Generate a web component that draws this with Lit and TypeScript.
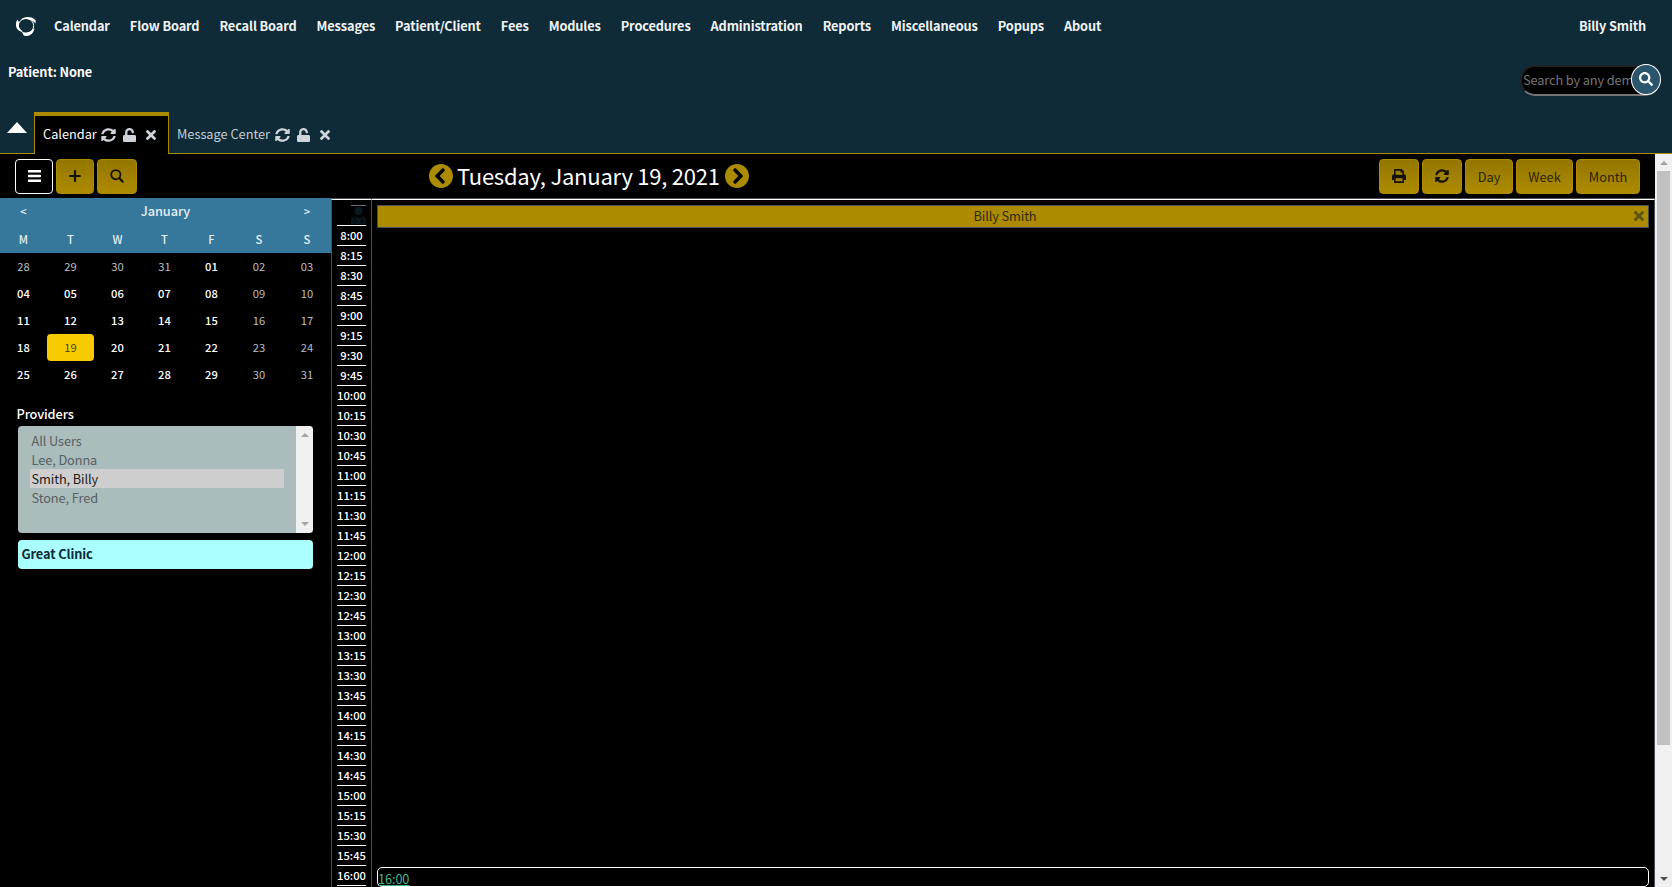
import { LitElement, html, css, svg } from "lit";
import { customElement } from "lit/decorators.js";
import { classMap } from "lit/directives/class-map.js";

const ICONS: Record<string, [string, unknown]> = {
  sync: ["0 0 512 512", svg`<path d="M370.72 133.28C339.458 104.008 298.888 87.962 255.848 88c-77.458.068-144.328 53.178-162.791 126.85-1.344 5.363-6.122 9.15-11.651 9.15H24.103c-7.498 0-13.194-6.807-11.807-14.176C33.933 94.924 134.813 8 256 8c66.448 0 126.791 26.136 171.315 68.685L463.03 40.97C478.149 25.851 504 36.559 504 57.941V192c0 13.255-10.745 24-24 24H345.941c-21.382 0-32.09-25.851-16.971-40.971l41.75-41.749zM32 296h134.059c21.382 0 32.09 25.851 16.971 40.971l-41.75 41.75c31.262 29.273 71.835 45.319 114.876 45.28 77.418-.07 144.315-53.144 162.787-126.849 1.344-5.363 6.122-9.15 11.651-9.15h57.304c7.498 0 13.194 6.807 11.807 14.176C478.067 417.076 377.187 504 256 504c-66.448 0-126.791-26.136-171.315-68.685L48.97 471.03C33.851 486.149 8 475.441 8 454.059V320c0-13.255 10.745-24 24-24z"/>`],
  unlock: ["0 0 448 512", svg`<path d="M400 256H152V152.900c0-39.600 31.700-72.500 71.300-72.900 40-.4 72.700 32.100 72.700 72v16c0 13.300 10.700 24 24 24h32c13.300 0 24-10.700 24-24v-16C376 68 307.500-.3 223.500 0 139.500.3 72 69.500 72 153.500V256H48c-26.500 0-48 21.500-48 48v160c0 26.500 21.500 48 48 48h352c26.500 0 48-21.500 48-48V304c0-26.500-21.500-48-48-48z"/>`],
  close: ["0 0 352 352", svg`<path d="M242.720 176l100.070-100.070c12.280-12.280 12.280-32.190 0-44.480l-22.240-22.240c-12.280-12.280-32.190-12.280-44.480 0L176 109.280 75.930 9.210c-12.280-12.280-32.190-12.280-44.480 0L9.210 31.450c-12.280 12.280-12.280 32.190 0 44.480L109.280 176 9.210 276.070c-12.280 12.280-12.280 32.190 0 44.480l22.240 22.240c12.280 12.280 32.200 12.280 44.480 0L176 242.720l100.070 100.070c12.280 12.280 32.200 12.280 44.480 0l22.240-22.240c12.280-12.280 12.280-32.190 0-44.480L242.720 176z"/>`],
  search: ["0 0 512 512", svg`<path d="M505 442.700L405.300 343c-4.500-4.500-10.600-7-17-7H372c27.600-35.300 44-79.700 44-128C416 93.100 322.900 0 208 0S0 93.100 0 208s93.100 208 208 208c48.300 0 92.700-16.400 128-44v16.300c0 6.400 2.500 12.500 7 17l99.700 99.700c9.400 9.400 24.600 9.400 33.900 0l28.300-28.300c9.400-9.400 9.400-24.600.1-34zM208 336c-70.700 0-128-57.200-128-128 0-70.700 57.200-128 128-128 70.700 0 128 57.200 128 128 0 70.700-57.200 128-128 128z"/>`],
  find: ["0 0 14 14", svg`<g fill="none" stroke="currentColor" stroke-linecap="round"><circle cx="5.800" cy="5.700" r="4.600" stroke-width="1.800"/><path d="M9.400 9.300l3.300 3.400" stroke-width="2.200"/></g>`],
  left: ["8 8 496 496", svg`<path d="M256 504C119 504 8 393 8 256S119 8 256 8s248 111 248 248-111 248-248 248zM142.100 273l135.500 135.500c9.400 9.400 24.600 9.400 33.900 0l17-17c9.400-9.400 9.400-24.600 0-33.900L226.900 256l101.600-101.600c9.400-9.400 9.400-24.600 0-33.900l-17-17c-9.400-9.400-24.600-9.400-33.900 0L142.100 239c-9.400 9.400-9.400 24.600 0 34z"/>`],
  right: ["8 8 496 496", svg`<path d="M256 8c137 0 248 111 248 248S393 504 256 504 8 393 8 256 119 8 256 8zm113.900 231L234.400 103.500c-9.400-9.400-24.600-9.400-33.900 0l-17 17c-9.400 9.400-9.400 24.600 0 33.900L285.100 256 183.500 357.600c-9.400 9.400-9.400 24.600 0 33.900l17 17c9.400 9.400 24.600 9.400 33.900 0L369.900 273c9.400-9.400 9.400-24.600 0-34z"/>`],
  print: ["0 0 14 14", svg`<path fill-rule="evenodd" d="M2.500 0h7.200L12 2.300V5.200a2 2 0 0 1 2 2V11h-2v3H2v-3H0V7.200a2 2 0 0 1 2-2V.5zM3.600 1.700v4h6.800V3.600H8.400V1.700zM3.600 9.300v3h6.800v-3z"/>`],
  plus: ["0 0 12 12", svg`<path d="M4.900.3h2.200v4.600h4.600v2.200H7.100v4.600H4.900V7.100H.3V4.900h4.600z"/>`],
  bars: ["0 0 13 12", svg`<path d="M0 0h13v2.500H0zM0 4.700h13v2.600H0zM0 9.500h13v2.500H0z"/>`],
  person: ["0 0 15 17", svg`<path d="M7.500 0a4 4 0 1 1 0 8 4 4 0 0 1 0-8M0 17v-3.500C0 11 1.500 9.500 4 9.500l3.500 2 3.500-2c2.500 0 4 1.500 4 4V17z"/><path d="M3.500 10v3m7.500-3v3M2.300 15.500v-1.200a1.400 1.400 0 0 1 2.800 0v1.200M9.800 14.300a1.300 1.300 0 1 0 2.600 0 1.300 1.300 0 1 0-2.600 0" fill="none" stroke="#000" stroke-width=".9"/>`],
  logo: ["0 0 20 21", svg`<path d="M4.500 4C7.500.2 15 0 18.400 3.100c1.600 1.200 1.600 3 .9 4.900C17 4.600 11 1.900 4.500 4z"/><path d="M1.200 4L3.300 6.500C1.800 10 3.200 14 7 16 3 16.600.2 13.500 0 9.600-.1 7.600.3 5.600 1.200 4z"/><path d="M6.600 17.300c4.200 1.300 8.400 0 11.700-4.600.2 3.600-2.700 7.400-6.600 8.200-2.600.4-4.900 0-5.100-3.600z"/><circle cx="10" cy="10.300" r="7.700" fill="none" stroke="currentColor" stroke-width="1"/>`],
};

const icon = (name: string) =>
  html`<svg class="ic ${name}" viewBox=${ICONS[name][0]} preserveAspectRatio="none">${ICONS[name][1]}</svg>`;

const base = css`
  :host { display: block; }
  * { box-sizing: border-box; }
  .ic { display: block; flex: none; fill: currentColor; overflow: visible; }
`;

@customElement("top-header")
class TopHeader extends LitElement {
  static styles = [base, css`
    :host { box-sizing: border-box; background: #0e2b37; height: 154px; display: flex; flex-direction: column; border-bottom: 1px solid #ad8b00; }
    .nav { display: flex; flex: none; height: 50px; padding: 2px 26px 0 16px; align-items: center; font-weight: 700; color: #f0f3f5; letter-spacing: -0.125px; }
    .logo { width: 20px; height: 20px; margin-right: 18px; color: #fff; }
    .links { display: flex; gap: 20px; }
    .user { margin-left: auto; }
    .patient { display: flex; flex: none; height: 62px; justify-content: space-between; padding: 13px 12px 0 8px; }
    .who { font-weight: 700; color: #fff; line-height: 17px; letter-spacing: -0.12px; }
    .box { display: flex; width: 140px; height: 31px; margin-top: 2px; background: #000; border: 2px inset #767676; border-radius: 15px; position: relative; align-items: center; padding-left: 1px; color: #767676; }
    .clip { width: 108px; overflow: hidden; white-space: nowrap; letter-spacing: -0.11px; }
    .go { position: absolute; right: -3px; top: -3px; width: 30px; height: 31px; border-radius: 50%; border: 1px solid #fff; background: #2a556d; color: #fff; display: grid; place-items: center; }
    .go .search { width: 14px; height: 14px; margin-top: -1px; }
    .tabs { display: flex; flex: none; height: 42px; }
    .tri { width: 34px; padding: 10px 0 0 7px; }
    .tri i { display: block; width: 20px; border: 10px solid transparent; border-top: 0; border-bottom: 11px solid #fff; }
    .tab { display: flex; align-items: center; height: 42px; color: #c4cdd3; padding: 3px 8px 0; }
    .tab.on { width: 135px; padding: 0 8px 1px; background: #000; color: #fff; border: 1px solid #ad8b00; border-top-width: 4px; border-bottom: 0; }
    .tab .sync { width: 15px; height: 14px; margin-left: 5px; }
    .tab.on .sync { margin-left: 4px; }
    .tab .unlock { width: 13px; height: 14px; margin-left: 7px; }
    .tab .close { width: 10px; height: 10px; margin-left: 10px; }
    .tab .ic { color: #ced4da; }
  `];
  private links = ["Calendar", "Flow Board", "Recall Board", "Messages", "Patient/Client", "Fees", "Modules", "Procedures", "Administration", "Reports", "Miscellaneous", "Popups", "About"];
  render() {
    return html`
      <nav class="nav">${icon("logo")}<div class="links">${this.links.map((l) => html`<span>${l}</span>`)}</div><span class="user">Billy Smith</span></nav>
      <div class="patient"><div class="who">Patient: None</div>
        <div class="box"><span class="clip">Search by any demographics</span><span class="go">${icon("search")}</span></div></div>
      <div class="tabs"><div class="tri"><i></i></div>
        ${["Calendar", "Message Center"].map((t, i) => html`<div class=${classMap({ tab: true, on: i === 0 })}><span>${t}</span>${icon("sync")}${icon("unlock")}${icon("close")}</div>`)}
      </div>`;
  }
}

@customElement("calendar-toolbar")
class CalendarToolbar extends LitElement {
  static styles = [base, css`
    :host { box-sizing: border-box; display: flex; height: 44px; padding: 5px 15px 0; justify-content: space-between; }
    .group { display: flex; gap: 3px; }
    .btn { height: 35px; border-radius: 4px; border: 1px solid #ad8b00; background: linear-gradient(#937600, #ad8b00); color: #151200; display: grid; place-items: center; }
    .menu { background: #000; border-color: #fff; color: #fff; }
    .w38 { width: 38px; } .w40 { width: 40px; }
    .day, .week, .month { color: #2b2400; padding-top: 1px; }
    .day { width: 48px; } .week { width: 57px; } .month { width: 64px; }
    .bars { width: 13px; height: 12px; margin-top: -1px; } .plus { width: 12px; height: 12px; margin-top: -1px; } .find { width: 14px; height: 14px; margin-top: -1px; }
    .print, .sync { width: 14px; height: 14px; margin-top: -1px; }
    .date { display: flex; gap: 5px; align-items: center; height: 35px; color: #fff; font-size: 22px; margin-right: auto; margin-left: 292px; letter-spacing: -0.24px; padding-bottom: 1px; }
    .date span { margin: -2px 0 0 -1px; }
    .date .ic { width: 24px; height: 24px; color: #ad8b00; }
  `];
  render() {
    return html`
      <div class="group"><div class="btn menu w38">${icon("bars")}</div><div class="btn w38">${icon("plus")}</div><div class="btn w40">${icon("find")}</div></div>
      <div class="date">${icon("left")}<span>Tuesday, January 19, 2021</span>${icon("right")}</div>
      <div class="group"><div class="btn w40">${icon("print")}</div><div class="btn w40">${icon("sync")}</div><div class="btn day">Day</div><div class="btn week">Week</div><div class="btn month">Month</div></div>`;
  }
}

@customElement("side-panel")
class SidePanel extends LitElement {
  static styles = [base, css`
    :host { width: 331px; flex: none; color: #fff; }
    .row { display: grid; grid-template-columns: repeat(5, 47px) 48px 1fr; height: 27px; align-items: center; text-align: center; font-size: 11.200px; }
    .head { background: #35789c; color: #e6eef3; font-weight: 500; height: 55px; display: grid; row-gap: 1px; align-content: start; }
    .head .month { grid-column: 2 / 7; font-size: 12.750px; letter-spacing: -0.1px; padding-left: 1px; }
    .d { height: 27px; line-height: 27px; font-weight: 500; }
    .dim { color: #b9bfc4; font-weight: 400; }
    .sel { background: #f8cb00; color: #4e4300; border-radius: 4px; font-weight: 400; }
    .label { margin: 16px 0 0 16.5px; line-height: 20px; height: 20px; font-weight: 500; letter-spacing: -0.12px; }
    .list { margin: 2px 18px 0 18px; height: 107px; background: #abbcbc; border-radius: 4px; display: flex; color: #566062; overflow: hidden; letter-spacing: -0.08px; }
    .opts { flex: 1; padding: 5px 12px 0; }
    .opt { height: 19px; line-height: 19px; padding-left: 1.5px; }
    .cur { background: #cecece; color: #1c1c1c; }
    .bar { width: 17px; background: #f0f0f0; display: flex; flex-direction: column; justify-content: space-between; align-items: center; padding: 7px 0; }
    .up { border: 4px solid transparent; border-top: 0; border-bottom-color: #a3a3a3; }
    .down { border: 4px solid transparent; border-bottom: 0; border-top-color: #a3a3a3; }
    .clinic { margin: 7px 18px 0 18px; height: 29px; line-height: 28px; border-radius: 4px; background: #aff; color: #0e2b37; font-weight: 700; padding-left: 3.500px; letter-spacing: -0.1px; }
  `];
  private weeks = [["28", "29", "30", "31", "01", "02", "03"], ["04", "05", "06", "07", "08", "09", "10"], ["11", "12", "13", "14", "15", "16", "17"], ["18", "19", "20", "21", "22", "23", "24"], ["25", "26", "27", "28", "29", "30", "31"]];
  render() {
    return html`
      <div class="head"><div class="row"><span>&lt;</span><span class="month">January</span><span>&gt;</span></div>
        <div class="row">${["M", "T", "W", "T", "F", "S", "S"].map((d) => html`<span>${d}</span>`)}</div></div>
      ${this.weeks.map((w, r) => html`<div class="row">${w.map((d, c) => html`<span class=${classMap({ d: true, dim: c > 4 || (r === 0 && c < 4), sel: r === 3 && c === 1 })}>${d}</span>`)}</div>`)}
      <div class="label">Providers</div>
      <div class="list"><div class="opts">${["All Users", "Lee, Donna", "Smith, Billy", "Stone, Fred"].map((o, i) => html`<div class=${classMap({ opt: true, cur: i === 2 })}>${o}</div>`)}</div>
        <div class="bar"><i class="up"></i><i class="down"></i></div></div>
      <div class="clinic">Great Clinic</div>`;
  }
}

@customElement("day-schedule")
class DaySchedule extends LitElement {
  static styles = [base, css`
    :host { box-sizing: border-box; flex: 1; display: flex; min-width: 0; height: 689px; overflow: hidden; border-top: 1px solid #495057; }
    .times { width: 41px; flex: none; border: solid #495057; border-width: 0 1px; border-top: 1px solid #fff; padding: 5px 5px 0; color: #fff; }
    .first { height: 20px; border-top: 1px solid #6a7075; width: 15px; margin-left: auto; color: #0a1920; padding-top: 1px; }
    .person { width: 15px; height: 17px; }
    .t { height: 20px; line-height: 18px; border-top: 1px solid #fff; text-align: center; font-size: 11.200px; font-weight: 500; white-space: nowrap; }
    .col { flex: 1; border-top: 1px solid #fff; border-right: 1px solid #495057; padding: 5px 5px 0; display: flex; flex-direction: column; }
    .name { height: 23px; flex: none; background: #ad8b00; border: 1px solid #495057; color: #2e2a12; display: grid; grid-template-columns: 1fr auto; text-align: center; align-items: center; padding-right: 4px; }
    .name span { letter-spacing: -0.1px; padding-right: 2px; }
    .name .ic { width: 10px; height: 10px; margin-top: -1px; color: #5b5215; }
    .slot { margin-top: 639px; height: 20px; flex: none; border: 1px solid #fff; border-radius: 5px; color: #46b08c; line-height: 21px; text-decoration: underline; letter-spacing: -0.1px; }
  `];
  private times = Array.from({ length: 33 }, (_, i) => `${8 + Math.floor(i / 4)}:${["00", "15", "30", "45"][i % 4]}`);
  render() {
    return html`<div class="times"><div class="first">${icon("person")}</div>${this.times.map((t) => html`<div class="t">${t}</div>`)}<div class="t"></div></div>
      <div class="col"><div class="name"><span>Billy Smith</span>${icon("close")}</div><div class="slot">16:00</div></div>`;
  }
}

@customElement("app-root")
class AppRoot extends LitElement {
  static styles = [base, css`
    :host { height: 887px; overflow: hidden; background: #000; font-family: "Noto Sans CJK SC", sans-serif; font-size: 12.750px; line-height: 1.3; }
    .body { display: flex; height: 733px; }
    .main { flex: 1; min-width: 0; }
    .cols { display: flex; height: 689px; }
    .scroll { width: 17px; background: #f0f0f0; display: flex; flex-direction: column; align-items: center; padding: 7px 0 6px; justify-content: space-between; }
    .up { border: 4px solid transparent; border-top: 0; border-bottom-color: #a3a3a3; }
    .thumb { width: 13px; height: 574px; background: #c1c1c1; margin: 6px 0 auto; }
    .down { border: 4px solid transparent; border-bottom: 0; border-top-color: #505050; }
  `];
  render() {
    return html`<top-header></top-header>
      <div class="body"><div class="main"><calendar-toolbar></calendar-toolbar><div class="cols"><side-panel></side-panel><day-schedule></day-schedule></div></div>
        <div class="scroll"><i class="up"></i><div class="thumb"></div><i class="down"></i></div></div>`;
  }
}
